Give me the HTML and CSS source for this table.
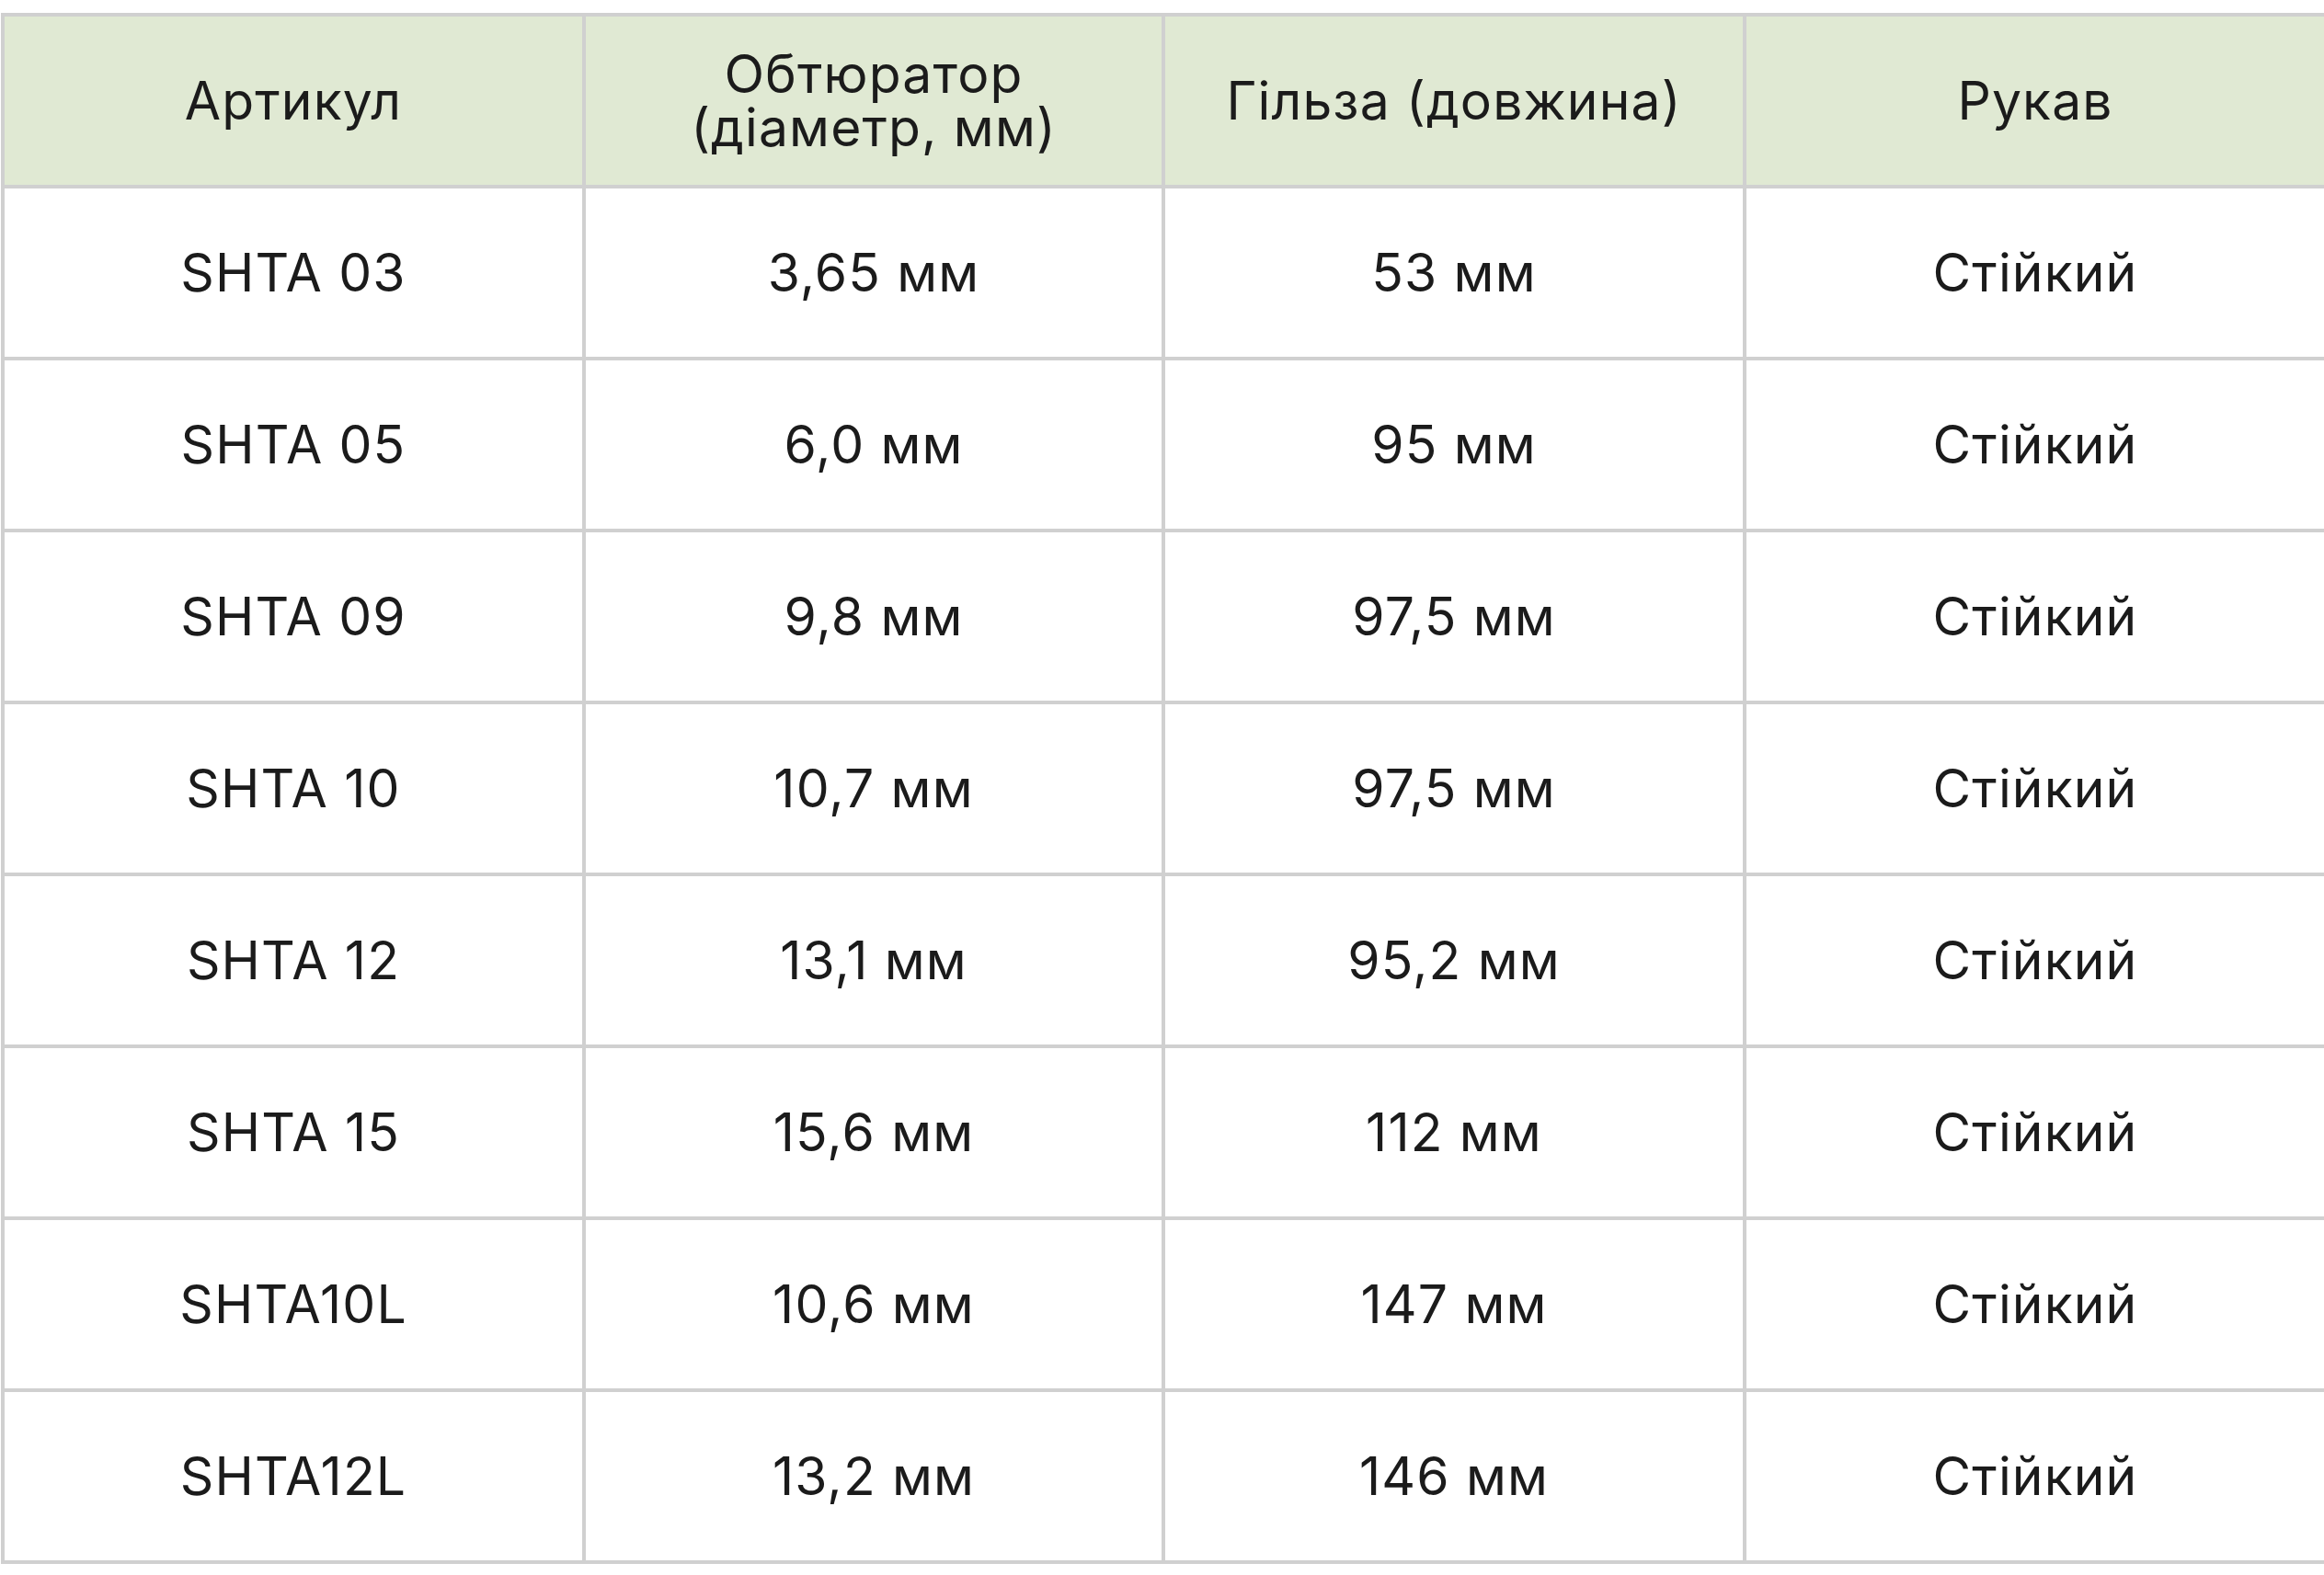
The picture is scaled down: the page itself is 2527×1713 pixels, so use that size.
FILE: index.html
```html
<!DOCTYPE html>
<html lang="uk">
<head>
<meta charset="utf-8">
<title>Таблиця SHTA</title>
<link rel="stylesheet" href="styles.css">
</head>
<body>
<div class="table" role="table">
  <div class="cell head" role="columnheader">Артикул</div>
  <div class="cell head stack" role="columnheader"><span class="line">Обтюратор</span><span class="line">(діаметр, мм)</span></div>
  <div class="cell head" role="columnheader">Гільза (довжина)</div>
  <div class="cell head" role="columnheader">Рукав</div>

  <div class="cell">SHTA 03</div><div class="cell">3,65 мм</div><div class="cell">53 мм</div><div class="cell">Стійкий</div>
  <div class="cell">SHTA 05</div><div class="cell">6,0 мм</div><div class="cell">95 мм</div><div class="cell">Стійкий</div>
  <div class="cell">SHTA 09</div><div class="cell">9,8 мм</div><div class="cell">97,5 мм</div><div class="cell">Стійкий</div>
  <div class="cell">SHTA 10</div><div class="cell">10,7 мм</div><div class="cell">97,5 мм</div><div class="cell">Стійкий</div>
  <div class="cell">SHTA 12</div><div class="cell">13,1 мм</div><div class="cell">95,2 мм</div><div class="cell">Стійкий</div>
  <div class="cell">SHTA 15</div><div class="cell">15,6 мм</div><div class="cell">112 мм</div><div class="cell">Стійкий</div>
  <div class="cell">SHTA10L</div><div class="cell">10,6 мм</div><div class="cell">147 мм</div><div class="cell">Стійкий</div>
  <div class="cell">SHTA12L</div><div class="cell">13,2 мм</div><div class="cell">146 мм</div><div class="cell">Стійкий</div>
</div>
</body>
</html>
```
FILE: styles.css
```css
html, body {
  margin: 0;
  padding: 0;
  background: #ffffff;
}

body {
  padding: 14px 0 0 1px;
  font-family: Inter, "Noto Sans", sans-serif;
  color: #1b1b1b;
}

.table {
  display: grid;
  grid-template-columns: 628px 626px 628px 628px;
  grid-auto-rows: 183px;
  gap: 4px;
  padding: 4px;
  width: max-content;
  background: #d0d0d0;
}

.cell {
  display: flex;
  align-items: center;
  justify-content: center;
  text-align: center;
  background: #ffffff;
  font-size: 57px;
  line-height: 57px;
  letter-spacing: 0.02em;
  white-space: nowrap;
}

.cell.head {
  background: #e0e9d3;
}

.cell.stack {
  flex-direction: column;
}

.line {
  display: block;
  height: 58px;
  line-height: 58px;
}
```
